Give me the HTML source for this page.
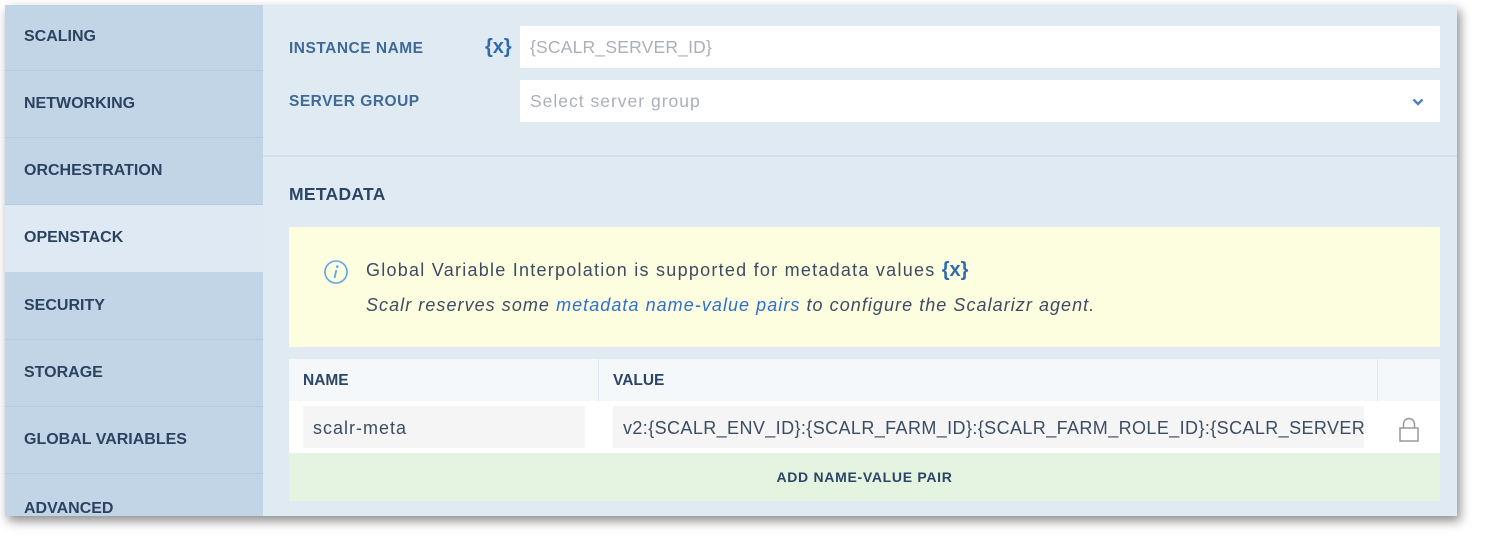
<!DOCTYPE html>
<html><head><meta charset="utf-8"><style>
*{margin:0;padding:0;box-sizing:border-box}
body{width:1486px;height:545px;background:#fff;position:relative;overflow:hidden;font-family:"Liberation Sans",sans-serif}
#panel{position:absolute;left:5px;top:5px;width:1452px;height:511px;background:#e0eaf3;box-shadow:3px 5px 10px rgba(0,0,0,.45);overflow:hidden}
#side{position:absolute;left:0;top:0;width:258px;height:511px;background:#c2d5e6}
.it{position:absolute;left:0;width:258px;height:67px;border-bottom:1px solid #b3cbe2;font-weight:bold;font-size:16px;color:#2a4361;padding-left:19px;line-height:66px}
.it.act{background:#dfe9f3;border-bottom:none}
.abs{position:absolute}
.lbl{font-weight:bold;font-size:15.5px;color:#3f6a97;letter-spacing:0.5px}
.inp{background:#fff;position:absolute;height:42px;font-size:17.5px;color:#aab0b8;padding-left:10px;line-height:42px;letter-spacing:0.6px}
.x{color:#2f6ab0;font-size:20px;font-weight:bold}
.info{font-size:18px;color:#3c4d63;letter-spacing:1.25px;white-space:nowrap}
</style></head><body>
<div id="panel">
<div id="side">
<div class="it" style="top:0;height:66px;line-height:64px">SCALING</div>
<div class="it" style="top:66px">NETWORKING</div>
<div class="it" style="top:133px">ORCHESTRATION</div>
<div class="it act" style="top:200px">OPENSTACK</div>
<div class="it" style="top:268px">SECURITY</div>
<div class="it" style="top:335px">STORAGE</div>
<div class="it" style="top:402px">GLOBAL VARIABLES</div>
<div class="it" style="top:469px;line-height:70px">ADVANCED</div>
</div>
<div class="abs lbl" style="left:284px;top:35px">INSTANCE NAME</div>
<div class="abs x" style="left:480px;top:31px">{x}</div>
<div class="inp" style="left:515px;top:21px;width:920px;letter-spacing:0.2px">{SCALR_SERVER_ID}</div>
<div class="abs lbl" style="left:284px;top:88px">SERVER GROUP</div>
<div class="inp" style="left:515px;top:75px;width:920px;letter-spacing:1px">Select server group
<svg class="abs" style="right:16px;top:18px" width="12" height="8" viewBox="0 0 12 8"><path d="M1.5 1.5L6 6L10.5 1.5" stroke="#4f7fb3" stroke-width="2.4" fill="none"/></svg></div>
<div class="abs" style="left:258px;top:150px;width:1194px;height:2px;background:#d2e0ee"></div>
<div class="abs" style="left:284px;top:179px;font-weight:bold;font-size:17.5px;color:#2b4566;letter-spacing:0.3px">METADATA</div>
<div class="abs" style="left:284px;top:222px;width:1151px;height:120px;background:#fdfddf"></div>
<svg class="abs" style="left:318px;top:254px" width="26" height="26" viewBox="0 0 26 26"><circle cx="13" cy="13" r="11" stroke="#5ea6e6" stroke-width="1.6" fill="none"/><circle cx="14.3" cy="7.6" r="1.3" fill="#5ea6e6"/><path d="M13.3 11L11.6 19" stroke="#5ea6e6" stroke-width="1.8"/></svg>
<div class="abs info" style="left:361px;top:254px">Global Variable Interpolation is supported for metadata values <span class="x" style="font-size:20px;letter-spacing:0">{x}</span></div>
<div class="abs info" style="left:361px;top:290px;font-style:italic;letter-spacing:1.05px">Scalr reserves some <span style="color:#2f6fcf">metadata name-value pairs</span> to configure the Scalarizr agent.</div>
<div class="abs" style="left:284px;top:354px;width:1151px;height:42px;background:#f5f8fb"></div>
<div class="abs" style="left:593px;top:354px;width:1px;height:42px;background:#dde7f1"></div>
<div class="abs" style="left:1372px;top:354px;width:1px;height:42px;background:#dde7f1"></div>
<div class="abs" style="left:298px;top:367px;font-weight:bold;font-size:15.5px;color:#2b4566">NAME</div>
<div class="abs" style="left:608px;top:367px;font-weight:bold;font-size:15.5px;color:#2b4566">VALUE</div>
<div class="abs" style="left:284px;top:396px;width:1151px;height:52px;background:#fff"></div>
<div class="inp" style="left:298px;top:401px;width:282px;background:#f5f5f5;color:#3c4d63;line-height:44px;font-size:18px;letter-spacing:1px">scalr-meta</div>
<div class="inp" style="left:608px;top:401px;width:751px;background:#f5f5f5;color:#3c4d63;line-height:44px;overflow:hidden;white-space:nowrap;font-size:18px;letter-spacing:0.4px">v2:{SCALR_ENV_ID}:{SCALR_FARM_ID}:{SCALR_FARM_ROLE_ID}:{SCALR_SERVER_ID}</div>
<svg class="abs" style="left:1394px;top:412px" width="20" height="26" viewBox="0 0 20 26"><path d="M4.5 11V7a5.5 5.5 0 0 1 11 0v4" stroke="#999" stroke-width="1.5" fill="none"/><rect x="1" y="11" width="18" height="13" stroke="#999" stroke-width="1.5" fill="none"/></svg>
<div class="abs" style="left:284px;top:448px;width:1151px;height:48px;background:#e5f3e1;text-align:center;line-height:48px;font-weight:bold;font-size:14px;color:#2b4566;letter-spacing:0.7px">ADD NAME-VALUE PAIR</div>
</div>
</body></html>
